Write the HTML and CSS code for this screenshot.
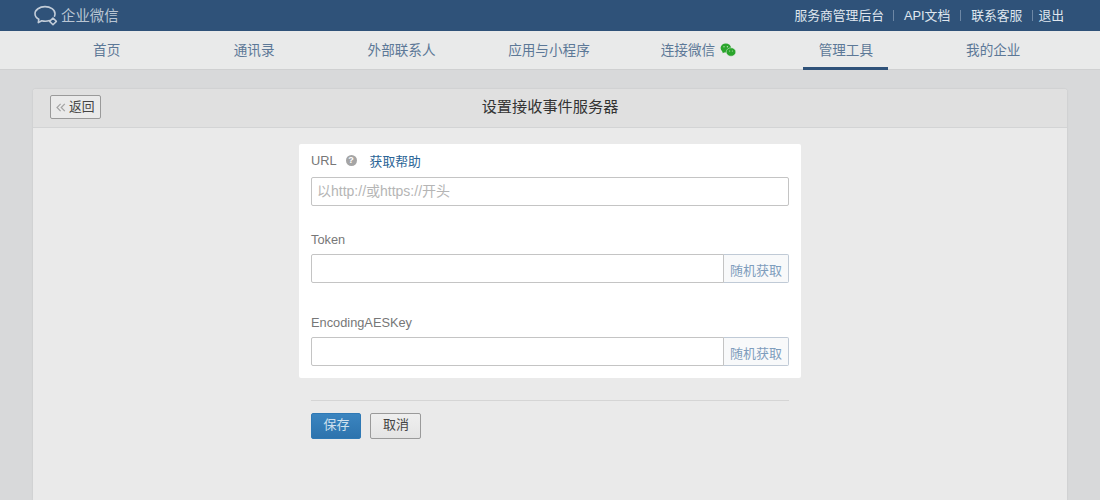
FILE: index.html
```html
<!DOCTYPE html>
<html lang="zh">
<head>
<meta charset="utf-8">
<title>设置接收事件服务器</title>
<link rel="stylesheet" href="styles.css">
</head>
<body>
<header class="topbar">
  <div class="brand">
    <svg class="brand-icon" width="26" height="22" viewBox="0 0 26 22" fill="none">
      <path d="M16.5 15.6C15.2 16 13.8 16.2 12.3 16.2C11 16.2 9.8 16 8.7 15.7L5.3 17.6L5.8 14.3C3.4 13 2 11 2 8.8C2 4.9 6.5 1.6 12 1.6C17.5 1.6 22 4.8 22 8.8C22 9.6 21.8 10.4 21.5 11.1" stroke="#c3cdd9" stroke-width="1.6" stroke-linecap="round" stroke-linejoin="round"/>
      <path d="M20 13L23.4 16.4L20 19.8L16.6 16.4Z" stroke="#c3cdd9" stroke-width="1.5" stroke-linejoin="round"/>
    </svg>
    <span class="brand-name">企业微信</span>
  </div>
  <nav class="toplinks">
    <a>服务商管理后台</a><i class="first"></i><a>API文档</a><i></i><a>联系客服</a><i class="narrow"></i><a>退出</a>
  </nav>
</header>
<nav class="tabs">
  <a class="tab">首页</a>
  <a class="tab">通讯录</a>
  <a class="tab">外部联系人</a>
  <a class="tab">应用与小程序</a>
  <a class="tab with-icon">连接微信
    <svg class="wechat" width="16" height="14" viewBox="0 0 16 14">
      <ellipse cx="5.8" cy="5" rx="5.2" ry="4.6" fill="#2aa52c"/>
      <path d="M2.6 8L2.6 10.2L5 9Z" fill="#2aa52c"/>
      <ellipse cx="11" cy="9" rx="4.8" ry="4.2" fill="#2aa52c" stroke="#e9eaea" stroke-width=".5"/>
      <circle cx="4" cy="3.8" r=".7" fill="#b9e0b5"/><circle cx="7.4" cy="3.8" r=".7" fill="#b9e0b5"/>
      <circle cx="9.6" cy="8" r=".6" fill="#b9e0b5"/><circle cx="12.4" cy="8" r=".6" fill="#b9e0b5"/>
    </svg>
  </a>
  <a class="tab active">管理工具</a>
  <a class="tab">我的企业</a>
</nav>
<main class="panel">
  <div class="panel-head">
    <a class="back">
      <svg class="chev" width="10" height="9" viewBox="0 0 10 9" fill="none"><path d="M4.6 .8L1 4.5L4.6 8.2M8.8 .8L5.2 4.5L8.8 8.2" stroke="#a3a3a3" stroke-width="1.2"/></svg>
      <span>返回</span>
    </a>
    <h1>设置接收事件服务器</h1>
  </div>
  <div class="panel-body">
    <form class="card">
      <div class="field first">
        <div class="label">URL<span class="help">?</span><a class="help-link">获取帮助</a></div>
        <input class="input" type="text" placeholder="以http://或https://开头">
      </div>
      <div class="field">
        <div class="label">Token</div>
        <div class="group"><input class="input" type="text"><button class="addon" type="button">随机获取</button></div>
      </div>
      <div class="field">
        <div class="label">EncodingAESKey</div>
        <div class="group"><input class="input" type="text"><button class="addon" type="button">随机获取</button></div>
      </div>
    </form>
    <div class="actions">
      <button class="btn primary" type="button">保存</button>
      <button class="btn" type="button">取消</button>
    </div>
  </div>
</main>
</body>
</html>
```
FILE: styles.css
```css
* { box-sizing: border-box; }
html, body { height: 100%; }
body {
  margin: 0;
  overflow: hidden;
  background: #d8d9da;
  font-family: "Liberation Sans", "Noto Sans CJK SC", sans-serif;
  color: #555;
}
a { text-decoration: none; }

.topbar {
  height: 31px;
  background: #2f5279;
  display: flex;
  align-items: center;
  justify-content: space-between;
  padding: 0 36px 0 33px;
}
.brand { display: flex; align-items: center; }
.brand-icon { margin-top: 1px; }
.brand-name { font-size: 14.4px; color: #b9c5d3; margin: -2px 0 0 2px; }
.toplinks { display: flex; align-items: center; font-size: 12.8px; color: #dfe6ee; margin-top: -2px; }
.toplinks i { width: 1px; height: 11px; background: #6d87a5; margin: 1px 10px 0; }
.toplinks i.first { margin: 1px 10px 0 9px; }
.toplinks i.narrow { margin: 1px 5px 0 10px; }

.tabs {
  height: 39px;
  margin-bottom: 19px;
  padding: 0 33px;
  display: flex;
  background: #e9eaea;
  border-bottom: 1px solid #cfd0d1;
}
.tab {
  flex: 1;
  display: flex;
  align-items: center;
  justify-content: center;
  font-size: 13.6px;
  color: #5c7897;
  position: relative;
  padding-bottom: 3px;
}
.tab.with-icon { padding-left: 2px; }
.tab .wechat { margin: 3px 0 0 5px; }
.tab.active::after {
  content: "";
  position: absolute;
  left: 31px;
  right: 32px;
  bottom: -1px;
  height: 3px;
  background: #2f5279;
}

.panel {
  margin: 0 33px;
  height: 411px;
  background: #eaeaea;
  border-radius: 3px 3px 0 0;
  box-shadow: 0 0 2px rgba(0, 0, 0, .12);
}
.panel-head {
  height: 39px;
  background: #e0e0e0;
  border-bottom: 1px solid #d3d4d5;
  border-radius: 3px 3px 0 0;
  display: flex;
  align-items: center;
  justify-content: center;
  position: relative;
}
.panel-head h1 { margin: 0 0 6px; font-size: 15.2px; font-weight: 400; color: #333; }
.back {
  position: absolute;
  left: 17px;
  top: 6px;
  width: 51px;
  height: 24px;
  padding-left: 5px;
  border: 1px solid #9a9a9a;
  border-radius: 2px;
  background: #eaeaea;
  display: flex;
  align-items: center;
  font-size: 12.8px;
  color: #444;
}
.back span { margin: -3px 0 0 3px; }
.chev { flex: none; }

.panel-body { width: 502px; margin: 16px auto 0; }
.card {
  height: 234px;
  padding: 6px 12px 0;
  background: #fff;
  border-radius: 2px;
}
.field { height: 83px; }
.field.first { height: 79px; }
.label {
  height: 20px;
  display: flex;
  align-items: center;
  font-size: 12.8px;
  color: #777;
  margin-bottom: 5px;
}
.first .label { margin-bottom: 7px; }
.help {
  width: 11px;
  height: 11px;
  margin: 1px 13px 0 9px;
  border-radius: 50%;
  background: #a5a5a5;
  color: #fff;
  font-size: 9px;
  font-weight: 700;
  line-height: 11px;
  text-align: center;
}
.help-link { color: #2a6496; }
.input {
  display: block;
  width: 100%;
  height: 29px;
  padding: 0 5px 2px;
  border: 1px solid #c4c4c4;
  border-radius: 2px;
  background: #fff;
  font: 14px "Liberation Sans", "Noto Sans CJK SC", sans-serif;
  outline: none;
}
.input::placeholder { color: #b5b5b5; opacity: 1; }
.group { display: flex; }
.group .input { flex: 1; min-width: 0; border-radius: 2px 0 0 2px; }
.addon {
  width: 66px;
  height: 29px;
  padding: 2px 0 0;
  border: 1px solid #c0cad6;
  border-left-color: #c4c4c4;
  border-radius: 0 2px 2px 0;
  margin-left: -1px;
  background: #f8f9fa;
  color: #7f9dbd;
  font: 13px "Liberation Sans", "Noto Sans CJK SC", sans-serif;
}
.actions {
  margin: 22px 12px 0;
  padding-top: 12px;
  border-top: 1px solid #d5d5d5;
  display: flex;
  gap: 9px;
}
.btn {
  width: 50px;
  height: 26px;
  padding: 0 0 5px 1px;
  border: 1px solid #9a9a9a;
  border-radius: 2px;
  background: linear-gradient(#efefef, #e4e4e4);
  color: #444;
  font: 13px "Liberation Sans", "Noto Sans CJK SC", sans-serif;
}
.btn.primary {
  border-color: #2f79b5;
  background: linear-gradient(#3b85c0, #2d73ad);
  color: #cfe0ee;
}
.btn + .btn { width: 51px; }
```
